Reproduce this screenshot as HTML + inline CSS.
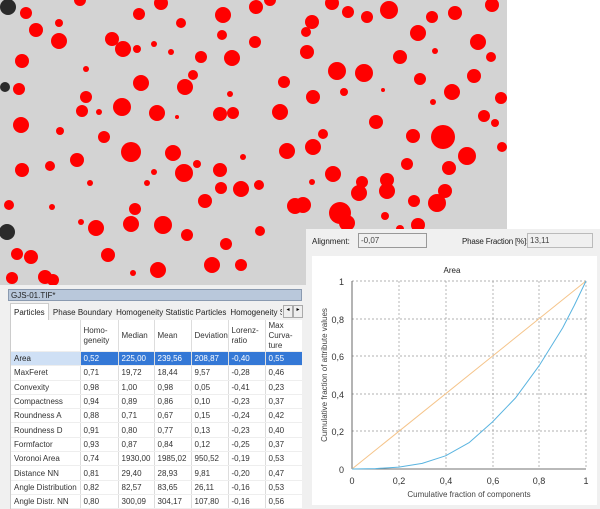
<!DOCTYPE html>
<html><head><style>
body{margin:0;width:600px;height:509px;overflow:hidden;background:#fff;font-family:"Liberation Sans",sans-serif;position:relative}
.abs{position:absolute}
table{border-collapse:collapse;font-size:8px;color:#333}
td{border-right:1px solid #ddd;border-bottom:1px solid #eee;padding:0 2px 0 3px;height:13.3px;white-space:nowrap;overflow:hidden}
tr.h td{height:31px;line-height:10px}
tr.sel td{background:#3478d6;color:#fff}
tr.sel td:first-child{background:#cfe0f5;color:#222}
</style></head><body>
<svg class="abs" style="left:0;top:0" width="507" height="286">
<rect width="507" height="286" fill="#d3d3d3"/>
<g fill="#2a2a2a"><circle cx="8" cy="7" r="8"/><circle cx="5" cy="87" r="5"/><circle cx="7" cy="232" r="8"/></g>
<g fill="#ff0000">
<circle cx="26" cy="13" r="6"/><circle cx="36" cy="30" r="7"/><circle cx="59" cy="23" r="4"/><circle cx="59" cy="41" r="8"/><circle cx="80" cy="0" r="6"/><circle cx="112" cy="39" r="7"/><circle cx="123" cy="49" r="8"/><circle cx="137" cy="49" r="4"/><circle cx="154" cy="44" r="3"/><circle cx="139" cy="14" r="6"/><circle cx="161" cy="3" r="7"/><circle cx="181" cy="23" r="5"/><circle cx="171" cy="52" r="3"/><circle cx="223" cy="15" r="8"/><circle cx="222" cy="35" r="5"/><circle cx="256" cy="7" r="7"/><circle cx="270" cy="0" r="6"/><circle cx="255" cy="42" r="6"/><circle cx="232" cy="58" r="8"/><circle cx="201" cy="57" r="6"/><circle cx="193" cy="75" r="5"/><circle cx="185" cy="87" r="8"/><circle cx="141" cy="83" r="8"/><circle cx="86" cy="69" r="3"/><circle cx="22" cy="61" r="7"/><circle cx="19" cy="89" r="6"/><circle cx="86" cy="97" r="6"/><circle cx="82" cy="111" r="6"/><circle cx="99" cy="112" r="3"/><circle cx="122" cy="107" r="9"/><circle cx="157" cy="113" r="8"/><circle cx="177" cy="117" r="2"/><circle cx="220" cy="114" r="7"/><circle cx="233" cy="113" r="6"/><circle cx="280" cy="112" r="8"/><circle cx="284" cy="82" r="6"/><circle cx="230" cy="94" r="3"/><circle cx="21" cy="125" r="8"/><circle cx="60" cy="131" r="4"/><circle cx="104" cy="137" r="6"/><circle cx="131" cy="152" r="10"/><circle cx="173" cy="153" r="8"/><circle cx="184" cy="173" r="9"/><circle cx="197" cy="164" r="4"/><circle cx="220" cy="170" r="7"/><circle cx="287" cy="151" r="8"/><circle cx="243" cy="157" r="3"/><circle cx="77" cy="160" r="7"/><circle cx="50" cy="166" r="5"/><circle cx="22" cy="170" r="7"/><circle cx="154" cy="172" r="3"/><circle cx="147" cy="183" r="3"/><circle cx="90" cy="183" r="3"/><circle cx="221" cy="188" r="6"/><circle cx="241" cy="189" r="8"/><circle cx="259" cy="185" r="5"/><circle cx="205" cy="201" r="7"/><circle cx="295" cy="206" r="8"/><circle cx="9" cy="205" r="5"/><circle cx="52" cy="207" r="3"/><circle cx="135" cy="209" r="6"/><circle cx="131" cy="224" r="8"/><circle cx="163" cy="225" r="9"/><circle cx="96" cy="228" r="8"/><circle cx="81" cy="222" r="3"/><circle cx="187" cy="235" r="6"/><circle cx="260" cy="231" r="5"/><circle cx="226" cy="244" r="6"/><circle cx="17" cy="254" r="6"/><circle cx="31" cy="257" r="7"/><circle cx="108" cy="255" r="7"/><circle cx="212" cy="265" r="8"/><circle cx="241" cy="265" r="6"/><circle cx="158" cy="270" r="8"/><circle cx="133" cy="273" r="3"/><circle cx="12" cy="278" r="6"/><circle cx="45" cy="277" r="7"/><circle cx="53" cy="280" r="6"/>
<circle cx="332" cy="3" r="7"/><circle cx="348" cy="12" r="6"/><circle cx="367" cy="17" r="6"/><circle cx="389" cy="10" r="9"/><circle cx="432" cy="17" r="6"/><circle cx="455" cy="13" r="7"/><circle cx="492" cy="5" r="7"/><circle cx="312" cy="22" r="7"/><circle cx="306" cy="32" r="5"/><circle cx="307" cy="52" r="7"/><circle cx="418" cy="33" r="8"/><circle cx="478" cy="42" r="8"/><circle cx="435" cy="51" r="3"/><circle cx="400" cy="57" r="7"/><circle cx="491" cy="57" r="5"/><circle cx="337" cy="71" r="9"/><circle cx="364" cy="73" r="9"/><circle cx="420" cy="79" r="6"/><circle cx="474" cy="76" r="7"/><circle cx="313" cy="97" r="7"/><circle cx="344" cy="92" r="4"/><circle cx="452" cy="92" r="8"/><circle cx="383" cy="90" r="2"/><circle cx="501" cy="98" r="6"/><circle cx="433" cy="102" r="3"/><circle cx="376" cy="122" r="7"/><circle cx="484" cy="116" r="6"/><circle cx="495" cy="123" r="4"/><circle cx="323" cy="134" r="5"/><circle cx="313" cy="147" r="8"/><circle cx="413" cy="136" r="7"/><circle cx="443" cy="137" r="12"/><circle cx="467" cy="156" r="9"/><circle cx="502" cy="147" r="5"/><circle cx="407" cy="164" r="6"/><circle cx="449" cy="168" r="7"/><circle cx="333" cy="174" r="8"/><circle cx="362" cy="182" r="6"/><circle cx="387" cy="180" r="7"/><circle cx="312" cy="182" r="3"/><circle cx="359" cy="193" r="8"/><circle cx="387" cy="191" r="8"/><circle cx="445" cy="191" r="7"/><circle cx="437" cy="203" r="9"/><circle cx="414" cy="201" r="6"/><circle cx="303" cy="205" r="8"/><circle cx="340" cy="213" r="11"/><circle cx="347" cy="223" r="8"/><circle cx="385" cy="216" r="4"/><circle cx="418" cy="225" r="7"/><circle cx="400" cy="229" r="4"/>
</g></svg>

<div class="abs" style="left:0;top:285px;width:306px;height:224px;background:#f0f0f0"></div>
<div class="abs" style="left:8px;top:289px;width:294px;height:12px;background:#b9c8db;border:1px solid #8a9ab0;font-size:8px;line-height:11px;padding-left:2px;box-sizing:border-box;color:#222">GJS-01.TIF*</div>
<div class="abs" style="left:10px;top:303px;width:272px;height:17px;font-size:8px;color:#222;line-height:17px;white-space:nowrap;overflow:hidden">
<span style="display:inline-block;background:#fff;padding:0 3px;border:1px solid #ccc;border-bottom:none">Particles</span>
<span style="padding:0 2px">Phase Boundary</span><span style="padding:0 2px">Homogeneity Statistic Particles</span><span style="padding:0 2px">Homogeneity Statis</span></div>
<div class="abs" style="left:283px;top:305px;width:8px;height:11px;border:1px solid #aaa;background:#eee;font-size:6px;text-align:center">◂</div>
<div class="abs" style="left:293px;top:305px;width:8px;height:11px;border:1px solid #aaa;background:#eee;font-size:6px;text-align:center">▸</div>
<div class="abs" style="left:10px;top:320px;width:291px;height:189px;background:#fff;overflow:hidden;border-left:1px solid #ccc">
<table style="width:291px;table-layout:fixed">
<colgroup><col style="width:69px"><col style="width:38px"><col style="width:36px"><col style="width:37px"><col style="width:37px"><col style="width:37px"><col style="width:37px"></colgroup>
<tr class="h"><td></td><td>Homo-<br>geneity</td><td>Median</td><td>Mean</td><td>Deviation</td><td>Lorenz-<br>ratio</td><td>Max<br>Curva-<br>ture</td></tr>
<tr class="sel"><td>Area</td><td>0,52</td><td>225,00</td><td>239,56</td><td>208,87</td><td>-0,40</td><td>0,55</td></tr>
<tr><td>MaxFeret</td><td>0,71</td><td>19,72</td><td>18,44</td><td>9,57</td><td>-0,28</td><td>0,46</td></tr>
<tr><td>Convexity</td><td>0,98</td><td>1,00</td><td>0,98</td><td>0,05</td><td>-0,41</td><td>0,23</td></tr>
<tr><td>Compactness</td><td>0,94</td><td>0,89</td><td>0,86</td><td>0,10</td><td>-0,23</td><td>0,37</td></tr>
<tr><td>Roundness A</td><td>0,88</td><td>0,71</td><td>0,67</td><td>0,15</td><td>-0,24</td><td>0,42</td></tr>
<tr><td>Roundness D</td><td>0,91</td><td>0,80</td><td>0,77</td><td>0,13</td><td>-0,23</td><td>0,40</td></tr>
<tr><td>Formfactor</td><td>0,93</td><td>0,87</td><td>0,84</td><td>0,12</td><td>-0,25</td><td>0,37</td></tr>
<tr><td>Voronoi Area</td><td>0,74</td><td>1930,00</td><td>1985,02</td><td>950,52</td><td>-0,19</td><td>0,53</td></tr>
<tr><td>Distance NN</td><td>0,81</td><td>29,40</td><td>28,93</td><td>9,81</td><td>-0,20</td><td>0,47</td></tr>
<tr><td>Angle Distribution</td><td>0,82</td><td>82,57</td><td>83,65</td><td>26,11</td><td>-0,16</td><td>0,53</td></tr>
<tr><td>Angle Distr. NN</td><td>0,80</td><td>300,09</td><td>304,17</td><td>107,80</td><td>-0,16</td><td>0,56</td></tr>
</table></div>

<div class="abs" style="left:306px;top:229px;width:294px;height:280px;background:#f0f0f0"></div>
<div class="abs" style="left:312px;top:237px;font-size:8px;color:#222">Alignment:</div>
<div class="abs" style="left:358px;top:233px;width:69px;height:15px;border:1px solid #999;box-sizing:border-box;font-size:8px;padding-left:2px;line-height:13px;color:#444">-0,07</div>
<div class="abs" style="left:462px;top:237px;font-size:8px;color:#222;letter-spacing:-0.2px">Phase Fraction [%]:</div>
<div class="abs" style="left:527px;top:233px;width:66px;height:15px;border:1px solid #bbb;box-sizing:border-box;font-size:8px;padding-left:2px;line-height:13px;color:#444">13,11</div>
<svg class="abs" style="left:312px;top:256px" width="285" height="249" font-family="Liberation Sans,sans-serif">
<rect width="285" height="249" fill="#fff"/>
<text x="140" y="17" font-size="8" text-anchor="middle" fill="#222">Area</text>
<g stroke="#999" stroke-dasharray="2,2" stroke-width="0.7">
<line x1="87" y1="25" x2="87" y2="213"/><line x1="134" y1="25" x2="134" y2="213"/><line x1="181" y1="25" x2="181" y2="213"/><line x1="227" y1="25" x2="227" y2="213"/><line x1="274" y1="25" x2="274" y2="213"/>
<line x1="40" y1="25" x2="274" y2="25"/><line x1="40" y1="63" x2="274" y2="63"/><line x1="40" y1="100" x2="274" y2="100"/><line x1="40" y1="138" x2="274" y2="138"/><line x1="40" y1="175" x2="274" y2="175"/>
</g>
<g stroke="#444" stroke-width="0.8"><line x1="40" y1="25" x2="40" y2="213"/><line x1="40" y1="213" x2="274" y2="213"/></g>
<line x1="40" y1="213" x2="274" y2="25" stroke="#f5c48a" stroke-width="1"/>
<polyline points="40,213 63.4,212.6 86.8,211.1 110.2,207.4 133.6,199.8 157,186.7 180.4,166 203.8,141.6 227.2,109.6 250.6,72 262.3,49.4 274,25" fill="none" stroke="#5ab4e0" stroke-width="1" stroke-linejoin="round"/>
<g font-size="9" fill="#333"><text x="32" y="29" text-anchor="end">1</text><text x="32" y="67" text-anchor="end">0,8</text><text x="32" y="104" text-anchor="end">0,6</text><text x="32" y="142" text-anchor="end">0,4</text><text x="32" y="179" text-anchor="end">0,2</text><text x="32" y="217" text-anchor="end">0</text>
<text x="40" y="228" text-anchor="middle">0</text><text x="87" y="228" text-anchor="middle">0,2</text><text x="134" y="228" text-anchor="middle">0,4</text><text x="181" y="228" text-anchor="middle">0,6</text><text x="227" y="228" text-anchor="middle">0,8</text><text x="274" y="228" text-anchor="middle">1</text></g>
<text x="157" y="241" font-size="8" text-anchor="middle" fill="#444">Cumulative fraction of components</text>
<text transform="translate(15,119) rotate(-90)" font-size="8" text-anchor="middle" fill="#444">Cumulative fraction of attribute values</text>
</svg>
</body></html>
